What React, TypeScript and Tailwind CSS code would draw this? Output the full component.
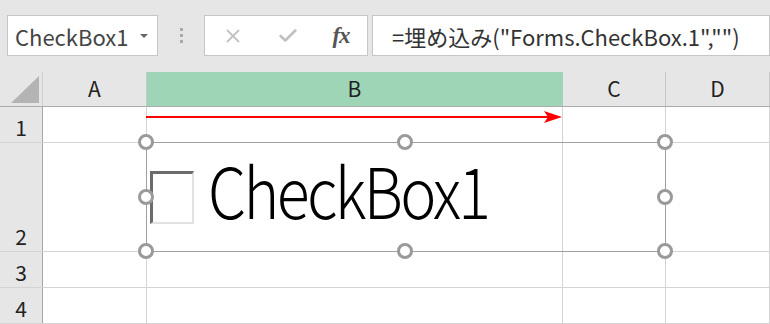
import { X, Check } from "lucide-react";

const cols = [
  { label: "A", w: "w-[104px]", sel: false },
  { label: "B", w: "w-[416px]", sel: true },
  { label: "C", w: "w-[103px]", sel: false },
  { label: "D", w: "flex-1", sel: false },
];

const rows = [
  { n: "1", h: "h-[36px]" },
  { n: "2", h: "h-[109px]" },
  { n: "3", h: "h-[36px]" },
  { n: "4", h: "h-[36px]" },
];

const Handle = ({ x, y }: { x: number; y: number }) => (
  <div
    className="absolute w-[16px] h-[16px] rounded-full border-[3px] border-[#9a9a9a] bg-white"
    style={{ left: x - 8, top: y - 8 }}
  />
);

const App = () => {
  const font = { fontFamily: '"Noto Sans CJK JP", "Noto Sans", sans-serif' };
  return (
    <div className="w-[770px] h-[324px] overflow-hidden relative bg-white" style={font}>
      {/* formula bar */}
      <div className="h-[72px] bg-[#e6e6e6] flex items-start pt-[15px] pl-[7px]">
        <div className="w-[151px] h-[41px] bg-white border border-[#c6c6c6] flex items-center pl-[7px] pr-[9px]">
          <span className="text-[22px] text-[#444] leading-none flex-1">CheckBox1</span>
          <span className="w-0 h-0 border-l-[4px] border-r-[4px] border-t-[4px] border-l-transparent border-r-transparent border-t-[#666]" />
        </div>
        <div className="w-[46px] h-[41px] flex flex-col items-center justify-center gap-[3px]">
          <span className="w-[3px] h-[3px] bg-[#aaa]" />
          <span className="w-[3px] h-[3px] bg-[#aaa]" />
          <span className="w-[3px] h-[3px] bg-[#aaa]" />
        </div>
        <div className="w-[164px] h-[41px] bg-white border border-[#c6c6c6] flex items-center">
          <div className="w-[55px] flex justify-center">
            <X className="w-[22px] h-[22px] text-[#c2c2c2]" strokeWidth={2} />
          </div>
          <div className="w-[55px] flex justify-center">
            <Check className="w-[22px] h-[22px] text-[#c2c2c2]" strokeWidth={3} />
          </div>
          <div className="w-[52px] flex justify-center">
            <span
              className="text-[23px] italic text-[#555] leading-none font-bold tracking-[-1px]"
              style={{ fontFamily: '"Liberation Serif", serif' }}
            >
              fx
            </span>
          </div>
        </div>
        <div className="ml-[4px] flex-1 h-[41px] bg-white border border-[#c6c6c6] flex items-center pl-[19px]">
          <span className="text-[22px] text-[#333] leading-none whitespace-nowrap">
            =埋め込み("Forms.CheckBox.1","")
          </span>
        </div>
      </div>

      {/* column header */}
      <div className="flex h-[35px] bg-[#e6e6e6] border-b border-[#ababab]">
        <div className="w-[43px] border-r border-[#d0d0d0] flex items-end justify-end pr-[3px] pb-[3px]">
          <svg width="28" height="27" viewBox="0 0 28 27">
            <polygon points="28,0 28,27 0,27" fill="#b4b4b4" />
          </svg>
        </div>
        {cols.map((c) => (
          <div
            key={c.label}
            className={`${c.w} flex items-center justify-center text-[21px] text-[#222] border-r ${
              c.sel ? "bg-[#9fd5b7] border-[#9fd5b7]" : "border-[#c8c8c8]"
            }`}
          >
            {c.label}
          </div>
        ))}
      </div>

      {/* rows */}
      {rows.map((r) => (
        <div key={r.n} className={`flex ${r.h} border-b border-[#d4d4d4]`}>
          <div className="w-[43px] bg-[#e6e6e6] border-r border-[#a6a6a6] flex items-end justify-center pb-[4px] text-[21px] text-[#222] leading-none">
            {r.n}
          </div>
          {cols.map((c) => (
            <div key={c.label} className={`${c.w} border-r border-[#d4d4d4]`} />
          ))}
        </div>
      ))}

      {/* red arrow */}
      <svg className="absolute left-[146px] top-[110px]" width="418" height="14" viewBox="0 0 418 14">
        <line x1="0" y1="7" x2="402" y2="7" stroke="#ff0000" strokeWidth="2" />
        <polygon points="398,1 416,7 398,13 402,7" fill="#ff0000" />
      </svg>

      {/* checkbox control */}
      <div className="absolute left-[146px] top-[142px] w-[520px] h-[110px] border border-[#a0a0a0] flex items-center">
        <div className="ml-[3px] w-[44px] h-[53px] bg-white border-t-[3px] border-l-[3px] border-t-[#6b6b6b] border-l-[#6b6b6b] border-r-2 border-b-2 border-r-[#e2e2e2] border-b-[#e2e2e2]" />
        <span className="ml-[14px] text-[70px] leading-none text-black font-light tracking-[-3px] origin-left scale-x-[0.87] -translate-y-[8px] whitespace-nowrap">
          CheckBox1
        </span>
      </div>
      <Handle x={146} y={142} />
      <Handle x={405} y={142} />
      <Handle x={665} y={142} />
      <Handle x={146} y={197} />
      <Handle x={665} y={197} />
      <Handle x={146} y={251} />
      <Handle x={405} y={251} />
      <Handle x={665} y={251} />
    </div>
  );
};

export default App;
